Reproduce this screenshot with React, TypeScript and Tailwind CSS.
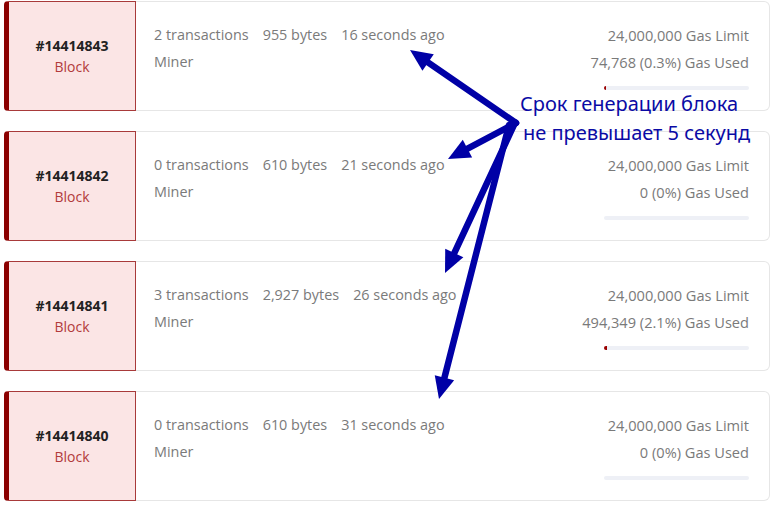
import React from "react";

type Row = {
  num: string;
  tx: string;
  bytes: string;
  ago: string;
  used: string;
  pct: number;
};

const rows: Row[] = [
  { num: "#14414843", tx: "2 transactions", bytes: "955 bytes", ago: "16 seconds ago", used: "74,768 (0.3%) Gas Used", pct: 0.3 },
  { num: "#14414842", tx: "0 transactions", bytes: "610 bytes", ago: "21 seconds ago", used: "0 (0%) Gas Used", pct: 0 },
  { num: "#14414841", tx: "3 transactions", bytes: "2,927 bytes", ago: "26 seconds ago", used: "494,349 (2.1%) Gas Used", pct: 2.1 },
  { num: "#14414840", tx: "0 transactions", bytes: "610 bytes", ago: "31 seconds ago", used: "0 (0%) Gas Used", pct: 0 },
];

function Card({ r }: { r: Row }) {
  return (
    <div className="flex h-[110px] w-[766px]">
      <div className="flex w-[132px] shrink-0 flex-col items-center justify-center rounded-l-[4px] border border-l-[5px] border-[#a83a3a] border-l-[#8b0000] bg-[#fbe5e5]">
        <div className="text-[14px] font-bold leading-[20px] text-[#222]">{r.num}</div>
        <div className="text-[14px] leading-[21px] text-[#b23b3b]">Block</div>
      </div>
      <div className="flex flex-1 justify-between rounded-r-[6px] border border-l-0 border-[#e6e6e6] bg-white pl-[18px] pr-[20px] pt-[23px]">
        <div className="flex flex-col gap-[7px] text-[14.4px] leading-[20px] text-[#7a7a7a]">
          <div className="flex gap-[14px]">
            <span>{r.tx}</span>
            <span>{r.bytes}</span>
            <span>{r.ago}</span>
          </div>
          <div>Miner</div>
        </div>
        <div className="flex flex-col items-end gap-[7px] text-[14.6px] leading-[20px] text-[#7a7a7a]">
          <div>24,000,000 Gas Limit</div>
          <div>{r.used}</div>
          <div className="mt-[7px] h-[4px] w-[145px] overflow-hidden rounded-full bg-[#eef0f6]">
            <div className="h-full bg-[#9b0000]" style={{ width: r.pct > 0 ? `${Math.max(2, (r.pct / 100) * 145)}px` : "0px" }} />
          </div>
        </div>
      </div>
    </div>
  );
}

function Arrow({ x1, y1, x2, y2 }: { x1: number; y1: number; x2: number; y2: number }) {
  const dx = x2 - x1;
  const dy = y2 - y1;
  const len = Math.hypot(dx, dy);
  const ux = dx / len;
  const uy = dy / len;
  const hl = 22;
  const hw = 10;
  const bx = x2 - ux * hl;
  const by = y2 - uy * hl;
  const px = -uy;
  const py = ux;
  return (
    <g>
      <line x1={x1} y1={y1} x2={bx + ux * 2} y2={by + uy * 2} stroke="#0000a6" strokeWidth={6.5} strokeLinecap="round" />
      <polygon
        points={`${x2},${y2} ${bx + px * hw},${by + py * hw} ${bx - px * hw},${by - py * hw}`}
        fill="#0000a6"
      />
    </g>
  );
}

export default function App() {
  return (
    <div className="relative h-[507px] w-[775px] overflow-hidden bg-white" style={{ fontFamily: "'Open Sans', 'Noto Sans', sans-serif" }}>
      <div className="flex flex-col gap-[20px] pl-[4px] pt-[1px]">
        {rows.map((r) => (
          <Card key={r.num} r={r} />
        ))}
      </div>
      <svg className="pointer-events-none absolute left-0 top-0" width={775} height={507}>
        <Arrow x1={516} y1={123} x2={410} y2={50} />
        <Arrow x1={516} y1={123} x2={448} y2={159} />
        <Arrow x1={514} y1={125} x2={445} y2={273} />
        <Arrow x1={509} y1={125} x2={439} y2={399} />
      </svg>
      <div
        className="absolute left-[520px] top-[89px] text-[20px] leading-[29px] text-[#0a0aa5]"
        style={{ fontFamily: "'Noto Sans', 'Open Sans', sans-serif" }}
      >
        <div>Срок генерации блока</div>
        <div className="pl-[3px]">не превышает 5 секунд</div>
      </div>
    </div>
  );
}
